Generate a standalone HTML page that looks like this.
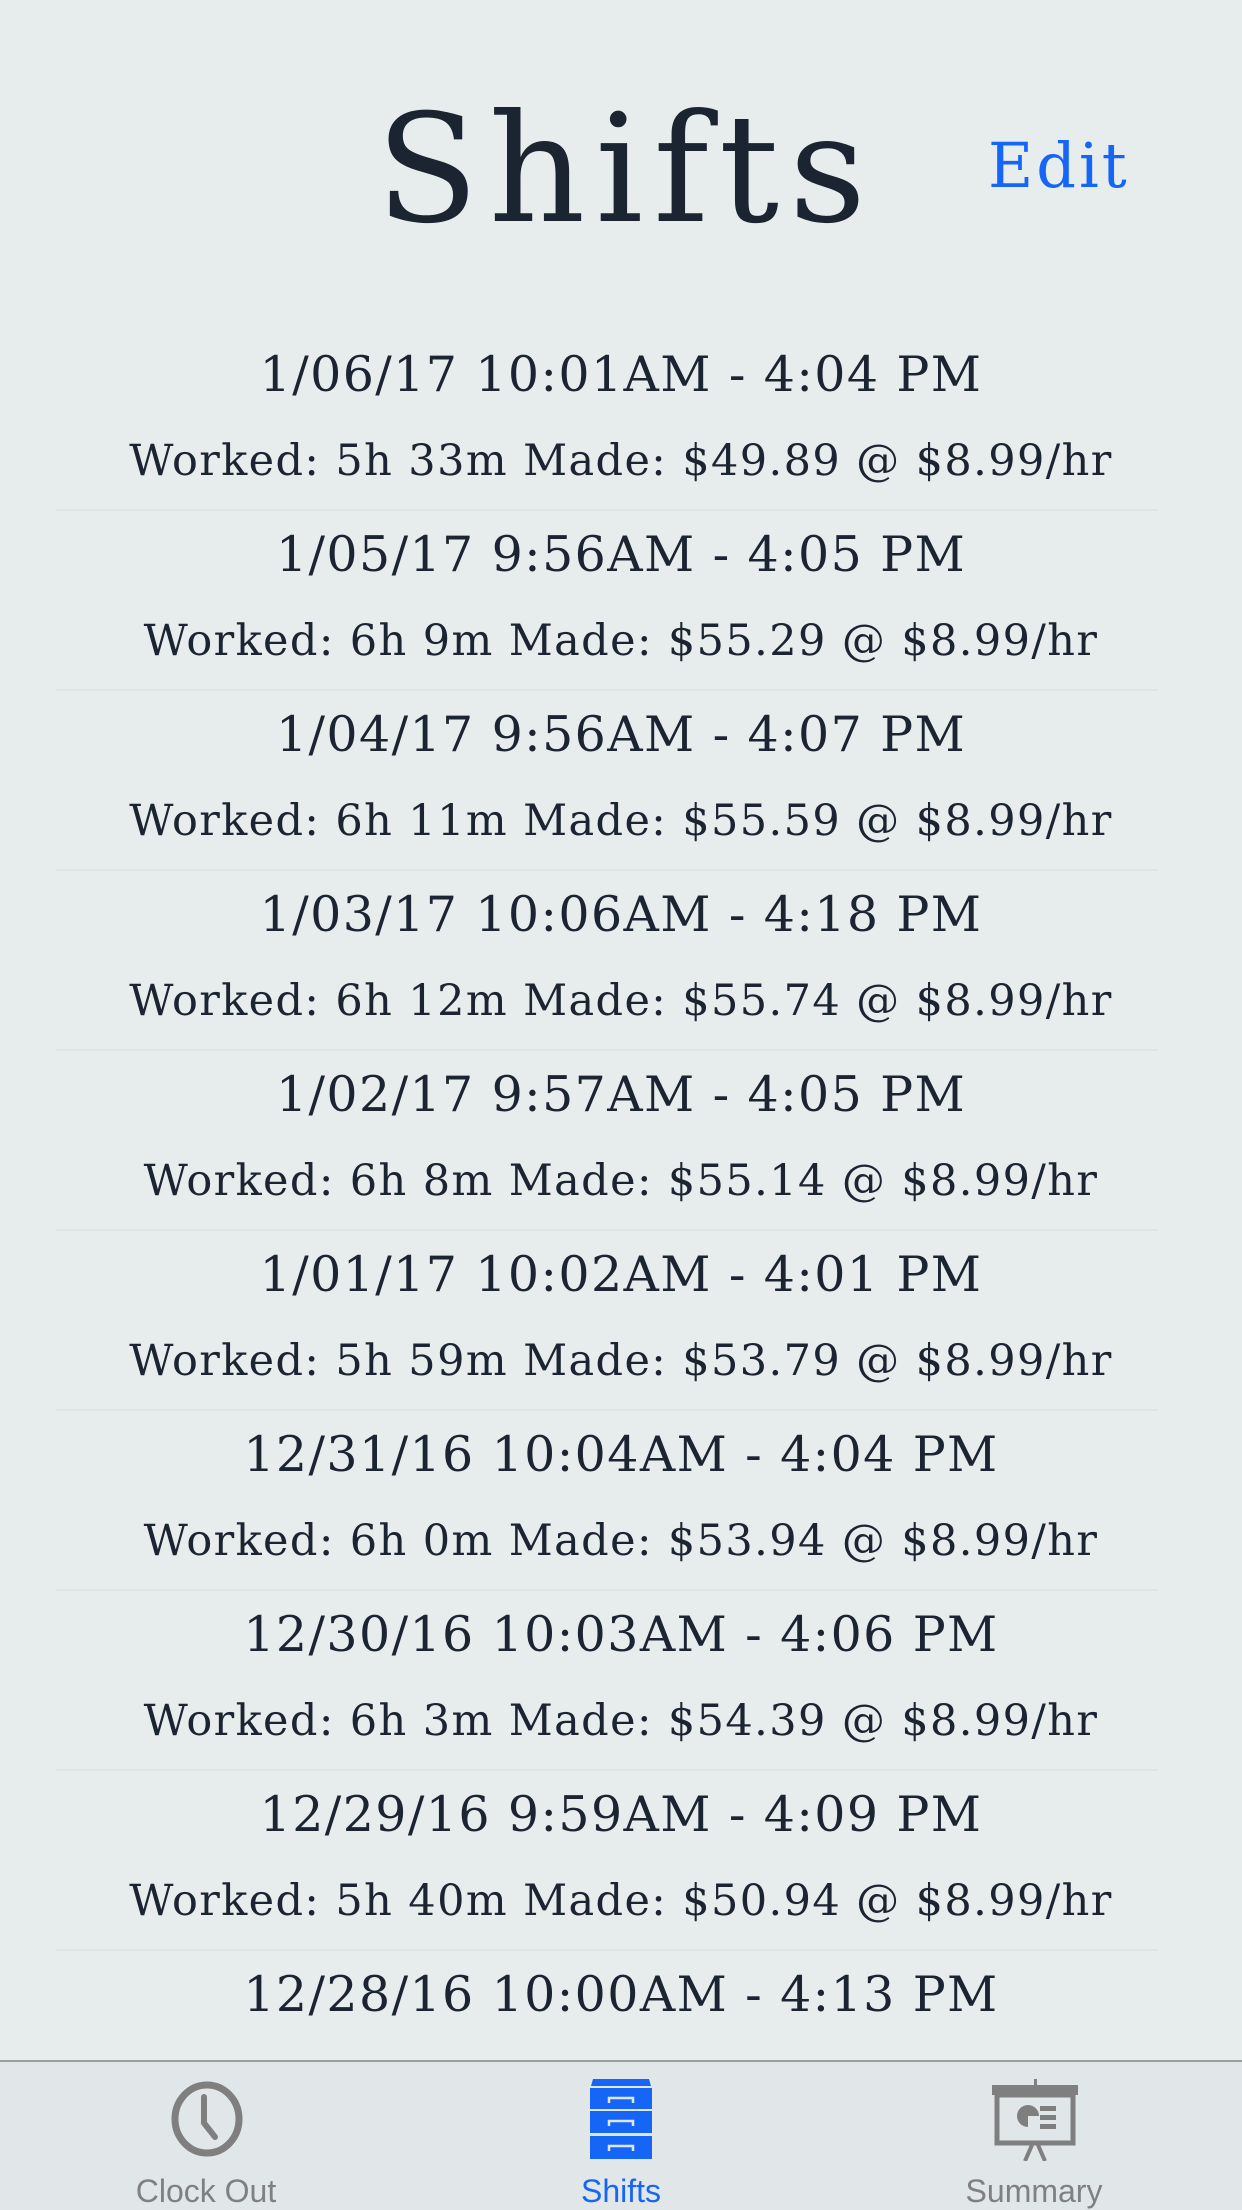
<!DOCTYPE html>
<html><head><meta charset="utf-8"><style>
html,body{margin:0;padding:0}
body{width:1242px;height:2208px;background:#e7ecec;position:relative;overflow:hidden;font-family:"DejaVu Serif","Liberation Serif",serif;color:#1b2431}
.t{position:absolute;left:0;width:1242px;text-align:center;white-space:nowrap;line-height:1}
.title{top:95px;font-size:150px;letter-spacing:10px;left:5px}
.edit{position:absolute;left:988px;top:135px;font-size:62px;color:#1566f7;line-height:1;letter-spacing:3px}
.h{font-size:49px;letter-spacing:1.4px}
.s{font-size:43px;letter-spacing:1.4px}
.sep{position:absolute;left:56px;width:1102px;height:2px;background:#dfe5e6}
.tab{position:absolute;left:0;top:2060px;width:1242px;height:148px;background:#e1e6e8;border-top:2px solid #9a9e9f}
.lbl{position:absolute;top:2173px;font-family:"Liberation Sans",sans-serif;font-size:32px;color:#808080;text-align:center;width:240px}
</style></head><body>
<div class="t title">Shifts</div>
<div class="edit">Edit</div>

<div class="t h" style="top:350px">1/06/17 10:01AM - 4:04 PM</div>
<div class="t s" style="top:440px">Worked: 5h 33m Made: $49.89 @ $8.99/hr</div>
<div class="sep" style="top:509px"></div>
<div class="t h" style="top:530px">1/05/17 9:56AM - 4:05 PM</div>
<div class="t s" style="top:620px">Worked: 6h 9m Made: $55.29 @ $8.99/hr</div>
<div class="sep" style="top:689px"></div>
<div class="t h" style="top:710px">1/04/17 9:56AM - 4:07 PM</div>
<div class="t s" style="top:800px">Worked: 6h 11m Made: $55.59 @ $8.99/hr</div>
<div class="sep" style="top:869px"></div>
<div class="t h" style="top:890px">1/03/17 10:06AM - 4:18 PM</div>
<div class="t s" style="top:980px">Worked: 6h 12m Made: $55.74 @ $8.99/hr</div>
<div class="sep" style="top:1049px"></div>
<div class="t h" style="top:1070px">1/02/17 9:57AM - 4:05 PM</div>
<div class="t s" style="top:1160px">Worked: 6h 8m Made: $55.14 @ $8.99/hr</div>
<div class="sep" style="top:1229px"></div>
<div class="t h" style="top:1250px">1/01/17 10:02AM - 4:01 PM</div>
<div class="t s" style="top:1340px">Worked: 5h 59m Made: $53.79 @ $8.99/hr</div>
<div class="sep" style="top:1409px"></div>
<div class="t h" style="top:1430px">12/31/16 10:04AM - 4:04 PM</div>
<div class="t s" style="top:1520px">Worked: 6h 0m Made: $53.94 @ $8.99/hr</div>
<div class="sep" style="top:1589px"></div>
<div class="t h" style="top:1610px">12/30/16 10:03AM - 4:06 PM</div>
<div class="t s" style="top:1700px">Worked: 6h 3m Made: $54.39 @ $8.99/hr</div>
<div class="sep" style="top:1769px"></div>
<div class="t h" style="top:1790px">12/29/16 9:59AM - 4:09 PM</div>
<div class="t s" style="top:1880px">Worked: 5h 40m Made: $50.94 @ $8.99/hr</div>
<div class="sep" style="top:1949px"></div>
<div class="t h" style="top:1970px">12/28/16 10:00AM - 4:13 PM</div>

<div class="tab"></div>
<svg style="position:absolute;left:168px;top:2081px" width="78" height="76" viewBox="0 0 78 76">
<ellipse cx="39" cy="38" rx="32" ry="34" fill="none" stroke="#7f7f7f" stroke-width="7"/>
<path d="M36 16 V42 L47 56" fill="none" stroke="#7f7f7f" stroke-width="6" stroke-linecap="round" stroke-linejoin="round"/>
</svg>
<svg style="position:absolute;left:590px;top:2079px" width="62" height="80" viewBox="0 0 62 80">
<path d="M3 0 H59 L61 7 H1 Z" fill="#1566f7"/>
<rect x="0" y="9" width="62" height="21" fill="#1566f7"/>
<rect x="0" y="32" width="62" height="22" fill="#1566f7"/>
<rect x="0" y="57" width="62" height="23" fill="#1566f7"/>
<path d="M19 24 V19 H43 V24 M19 47 V42 H43 V47 M19 72 V67 H43 V72" fill="none" stroke="#dfe6f3" stroke-width="2.5"/>
</svg>
<svg style="position:absolute;left:992px;top:2079px" width="86" height="82" viewBox="0 0 86 82">
<rect x="42" y="0" width="3" height="8" fill="#7f7f7f"/>
<rect x="0" y="6" width="86" height="10" fill="#7f7f7f"/>
<rect x="5" y="16" width="76" height="48" fill="none" stroke="#7f7f7f" stroke-width="5"/>
<path d="M36 26 A11 11 0 1 0 36 48 V37 H47 A11 11 0 0 0 36 26Z" fill="#7f7f7f"/>
<rect x="48" y="27" width="16" height="5" fill="#7f7f7f"/>
<rect x="48" y="36" width="16" height="5" fill="#7f7f7f"/>
<rect x="48" y="45" width="16" height="5" fill="#7f7f7f"/>
<path d="M40 66 L33 82 M46 66 L53 82" stroke="#7f7f7f" stroke-width="4"/>
</svg>
<div class="lbl" style="left:86px">Clock Out</div>
<div class="lbl" style="left:501px;color:#1566f7">Shifts</div>
<div class="lbl" style="left:914px">Summary</div>
</body></html>
